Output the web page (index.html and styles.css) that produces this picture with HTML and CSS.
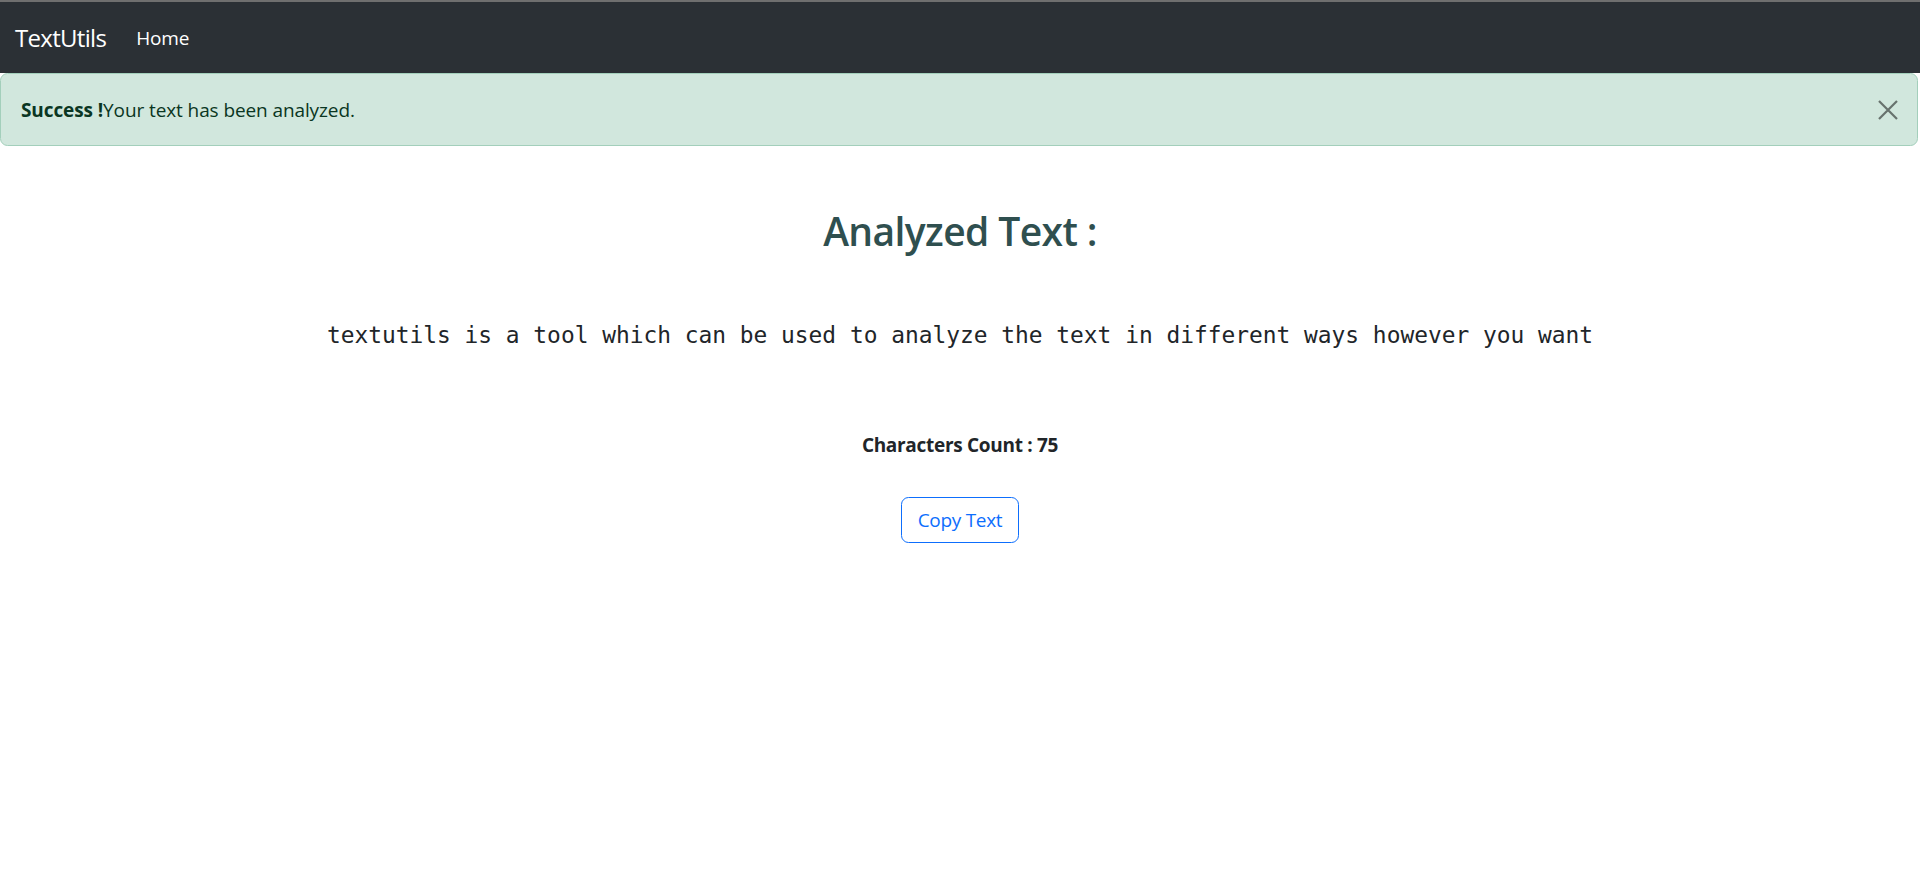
FILE: index.html
```html
<!DOCTYPE html>
<html lang="en">
<head>
<meta charset="utf-8">
<title>TextUtils</title>
<link rel="stylesheet" href="styles.css">
</head>
<body>
<nav class="navbar">
  <a class="brand" href="#">TextUtils</a>
  <a class="nav-link" href="#">Home</a>
</nav>
<div class="alert">
  <span><strong>Success !</strong>Your text has been analyzed.</span>
  <button class="btn-close" type="button" aria-label="Close">
    <svg viewBox="0 0 20 20" width="20" height="20"><path d="M1 1L19 19M19 1L1 19" stroke="#000" stroke-width="2.2" fill="none"/></svg>
  </button>
</div>
<main class="content">
  <h2 class="title">Analyzed Text :</h2>
  <p class="analyzed">textutils is a tool which can be used to analyze the text in different ways however you want</p>
  <p class="count">Characters Count : 75</p>
  <button class="btn-copy" type="button">Copy Text</button>
</main>
</body>
</html>
```

FILE: styles.css
```css
* { box-sizing: border-box; }
html, body { margin: 0; padding: 0; }
body {
  font-family: "Open Sans", "Noto Sans", sans-serif;
  font-size: 20px;
  color: #212529;
  background: #fff;
}
.navbar {
  display: flex;
  align-items: center;
  height: 73px;
  border-top: 2px solid #6f6f6f;
  background: #2b3035;
  padding: 0 15px;
}
.brand {
  color: #fff;
  text-decoration: none;
  font-size: 24px;
  margin-right: 30px;
  letter-spacing: -0.7px;
}
.nav-link {
  color: #fff;
  text-decoration: none;
  font-size: 19px;
  letter-spacing: -0.1px;
}
.alert {
  display: flex;
  align-items: center;
  justify-content: space-between;
  height: 73px;
  margin-right: 2px;
  padding: 0 20px 0 20px;
  background: #d1e7dd;
  border: 1px solid #a3cfbb;
  border-radius: 7.5px;
  color: #0a3622;
  font-size: 19px;
  letter-spacing: -0.1px;
}
.alert strong { font-weight: 700; }
.btn-close {
  background: none;
  border: 0;
  padding: 0;
  margin-right: -1px;
  width: 20px;
  height: 20px;
  opacity: 0.5;
  display: flex;
}
.content {
  display: flex;
  flex-direction: column;
  align-items: center;
}
.title {
  margin: 61px 0 0;
  font-size: 39px;
  line-height: 48px;
  font-weight: 600;
  color: #2f4f4f;
  letter-spacing: -0.6px;
}
.analyzed {
  margin: 63px 0 0;
  font-family: "DejaVu Sans Mono", "Liberation Mono", monospace;
  font-size: 22.86px;
  line-height: 34px;
  color: #212529;
}
.count {
  margin: 78px 0 0;
  font-size: 19px;
  line-height: 30px;
  font-weight: 700;
  letter-spacing: -0.3px;
}
.btn-copy {
  margin-top: 37px;
  height: 46px;
  width: 118px;
  padding: 0;
  font-family: inherit;
  font-size: 19px;
  color: #0d6efd;
  background: #fff;
  border: 1px solid #0d6efd;
  border-radius: 7.5px;
  letter-spacing: -0.3px;
}
```
